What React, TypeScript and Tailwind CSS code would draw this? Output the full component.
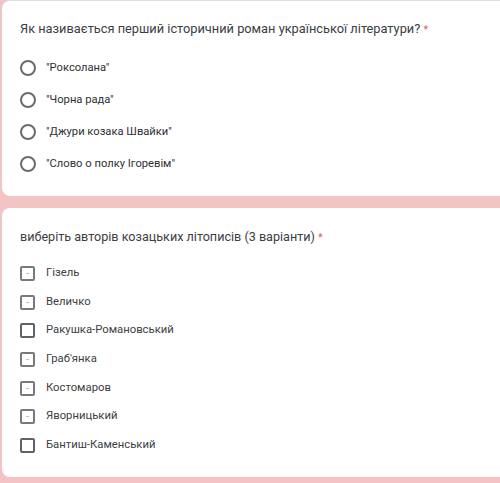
import React from "react";

const radios = ['"Роксолана"', '"Чорна рада"', '"Джури козака Швайки"', '"Слово о полку Ігоревім"'];
const checks: [string, boolean][] = [
  ["Гізель", true],
  ["Величко", true],
  ["Ракушка-Романовський", false],
  ["Граб'янка", true],
  ["Костомаров", true],
  ["Яворницький", true],
  ["Бантиш-Каменський", false],
];

export default function App() {
  return (
    <div
      className="w-[500px] h-[483px] overflow-hidden bg-[#f4c4c4] pl-[2px]"
      style={{ fontFamily: "Roboto, 'Noto Sans', sans-serif" }}
    >
      <div className="w-[520px] h-[196px] bg-white rounded-[8px] border-t border-[#e0e0e0] pt-[18px] pl-[18px]">
        <div className="text-[12.8px] leading-[20px] text-[#3c4043]">
          Як називається перший історичний роман української літератури?{" "}
          <span className="text-[#e06055] text-[11px]">*</span>
        </div>
        <div className="mt-[12px] flex flex-col">
          {radios.map((r) => (
            <div key={r} className="h-[32px] flex items-center">
              <div className="w-[16px] h-[16px] rounded-full border-[2px] border-[#6b6b6b]" />
              <span className="ml-[10px] text-[11.2px] text-[#303134]">{r}</span>
            </div>
          ))}
        </div>
      </div>
      <div className="mt-[12px] w-[520px] h-[269px] bg-white rounded-[8px] pt-[19px] pl-[18px]">
        <div className="text-[12.6px] leading-[20px] text-[#3c4043]">
          виберіть авторів козацьких літописів (3 варіанти){" "}
          <span className="text-[#e06055] text-[11px]">*</span>
        </div>
        <div className="mt-[11px] flex flex-col">
          {checks.map(([c, light]) => (
            <div key={c} className="h-[28.7px] flex items-center">
              <div
                className={
                  "w-[15px] h-[15px] rounded-[2px] border-[2px] flex items-center justify-center " +
                  (light ? "border-[#7a7a7a]" : "border-[#5f6368]")
                }
              >
                {light && <div className="w-[3px] h-[1px] bg-[#c0c0c0]" />}
              </div>
              <span className="ml-[11px] text-[11.3px] text-[#3c4043]">{c}</span>
            </div>
          ))}
        </div>
      </div>
    </div>
  );
}
